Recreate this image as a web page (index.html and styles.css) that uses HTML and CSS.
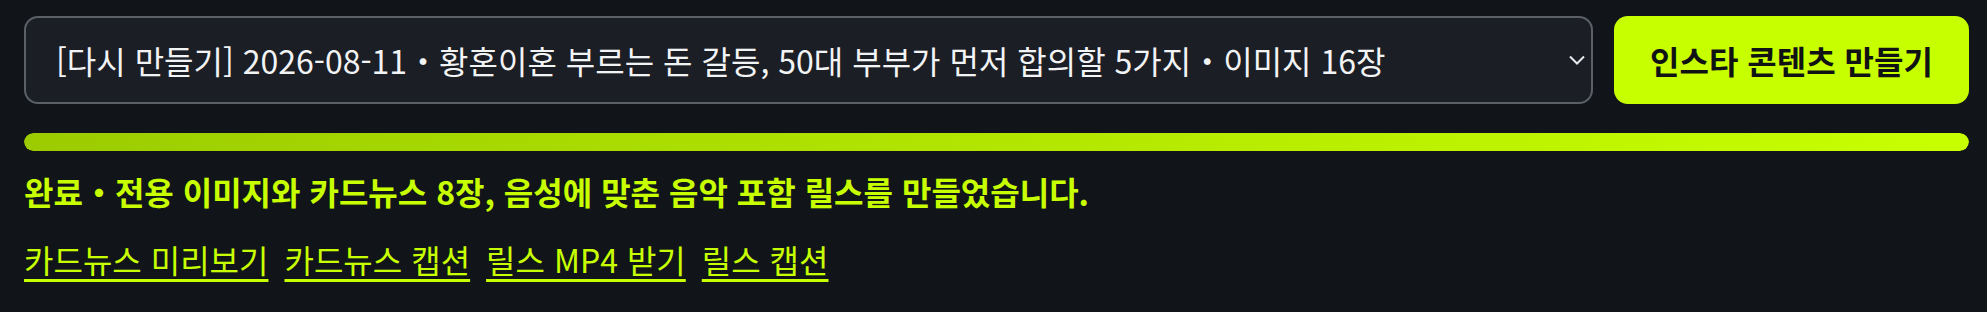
FILE: index.html
```html
<!DOCTYPE html>
<html lang="ko">
<head>
    <meta charset="UTF-8">
    <meta name="viewport" content="width=device-width, initial-scale=1.0">
    <title>인스타 콘텐츠</title>
    <link rel="stylesheet" href="styles.css">
</head>
<body>
    <div class="panel">
        <div class="controls">
            <div class="select-wrap">
                <select id="episode" class="episode-select">
                    <option>[다시 만들기] 2026-08-11・황혼이혼 부르는 돈 갈등, 50대 부부가 먼저 합의할 5가지・이미지 16장</option>
                </select>
                <svg class="chevron" width="18" height="11" viewBox="0 0 18 11">
                    <path d="M2 2 L9 9 L16 2" fill="none" stroke="#e8eaed" stroke-width="2"/>
                </svg>
            </div>
            <button class="make-btn">인스타 콘텐츠 만들기</button>
        </div>
        <div class="progress">
            <div class="progress-fill" style="width: 100%"></div>
        </div>
        <p class="status">완료・전용 이미지와 카드뉴스 8장, 음성에 맞춘 음악 포함 릴스를 만들었습니다.</p>
        <div class="links">
            <a href="#">카드뉴스 미리보기</a>
            <a href="#">카드뉴스 캡션</a>
            <a href="#">릴스 MP4 받기</a>
            <a href="#">릴스 캡션</a>
        </div>
    </div>
</body>
</html>
```

FILE: styles.css
```css
body {
    margin: 0;
    background-color: #111419;
    font-family: 'Noto Sans CJK KR', 'Noto Sans', sans-serif;
    color: #c8ff00;
}
.panel {
    padding: 16px 18px 0 24px;
}
.controls {
    display: flex;
    gap: 21px;
    height: 88px;
}
.select-wrap {
    position: relative;
    flex: 1;
}
.episode-select {
    appearance: none;
    -webkit-appearance: none;
    width: 100%;
    height: 100%;
    padding: 0 50px 0 30px;
    background-color: #1b1e24;
    border: 2px solid #5b5f66;
    border-radius: 14px;
    color: #f2f3f5;
    font-family: inherit;
    font-size: 32px;
    outline: none;
}
.chevron {
    position: absolute;
    right: 7px;
    top: 50%;
    transform: translateY(-50%);
    pointer-events: none;
}
.make-btn {
    width: 355px;
    border: none;
    border-radius: 14px;
    background-color: #c8ff00;
    color: #101214;
    font-family: inherit;
    font-size: 32px;
    font-weight: bold;
    cursor: pointer;
}
.progress {
    margin-top: 29px;
    height: 18px;
    border-radius: 9px;
    overflow: hidden;
}
.progress-fill {
    height: 100%;
    border-radius: 9px;
    background: linear-gradient(90deg, #9ccc00, #c8ff00);
}
.status {
    margin: 17px 0 0;
    font-size: 32px;
    font-weight: bold;
}
.links {
    display: flex;
    gap: 16px;
    margin-top: 22px;
}
.links a {
    color: #c8ff00;
    font-size: 32px;
    text-decoration: underline;
    text-decoration-thickness: 3px;
    text-underline-offset: 6px;
}
```
